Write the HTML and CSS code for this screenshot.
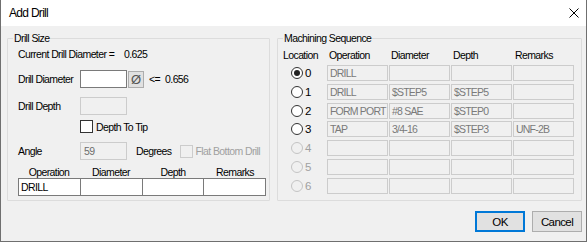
FILE: index.html
```html
<!DOCTYPE html>
<html lang="en">
<head>
  <meta charset="UTF-8" />
  <title>Add Drill</title>
  <link rel="stylesheet" href="styles.css">
</head>
<body>
  <div class="window">
    <div class="titlebar">
      <span class="title">Add Drill</span>
      <svg class="close" width="10" height="10" viewBox="0 0 10 10">
        <path d="M0.5 0.5 L9.5 9.5 M9.5 0.5 L0.5 9.5" stroke="#000" stroke-width="1" fill="none"/>
      </svg>
    </div>

    <div class="client">
      <div class="groups">
        <div class="group group-size">
          <span class="group-title">Drill Size</span>

          <div class="row row-current">
            <span class="label label-wide">Current Drill Diameter =</span>
            <span class="value">0.625</span>
          </div>

          <div class="row row-field">
            <span class="label">Drill Diameter</span>
            <span class="textbox"></span>
            <span class="dia-btn">Ø</span>
            <span class="limit">&lt;=</span>
            <span class="limit-value">0.656</span>
          </div>

          <div class="row row-field">
            <span class="label">Drill Depth</span>
            <span class="textbox disabled"></span>
          </div>

          <div class="row row-check">
            <span class="checkbox"></span>
            <span class="check-label">Depth To Tip</span>
          </div>

          <div class="row row-field row-angle">
            <span class="label">Angle</span>
            <span class="textbox disabled">59</span>
            <span class="degrees">Degrees</span>
            <span class="checkbox disabled"></span>
            <span class="check-label muted">Flat Bottom Drill</span>
          </div>

          <div class="op-head">
            <span>Operation</span>
            <span>Diameter</span>
            <span>Depth</span>
            <span>Remarks</span>
          </div>
          <div class="op-row">
            <span>DRILL</span>
            <span></span>
            <span></span>
            <span></span>
          </div>
        </div>

        <div class="group group-seq">
          <span class="group-title">Machining Sequence</span>

          <div class="seq-head">
            <span class="loc">Location</span>
            <span>Operation</span>
            <span>Diameter</span>
            <span>Depth</span>
            <span>Remarks</span>
          </div>

          <div class="seq-rows">
            <div class="seq-row">
              <span class="loc"><span class="radio checked"></span>0</span>
              <span class="cell">DRILL</span>
              <span class="cell"></span>
              <span class="cell"></span>
              <span class="cell"></span>
            </div>
            <div class="seq-row">
              <span class="loc"><span class="radio"></span>1</span>
              <span class="cell">DRILL</span>
              <span class="cell">$STEP5</span>
              <span class="cell">$STEP5</span>
              <span class="cell"></span>
            </div>
            <div class="seq-row">
              <span class="loc"><span class="radio"></span>2</span>
              <span class="cell">FORM PORT</span>
              <span class="cell">#8 SAE</span>
              <span class="cell">$STEP0</span>
              <span class="cell"></span>
            </div>
            <div class="seq-row">
              <span class="loc"><span class="radio"></span>3</span>
              <span class="cell">TAP</span>
              <span class="cell">3/4-16</span>
              <span class="cell">$STEP3</span>
              <span class="cell">UNF-2B</span>
            </div>
            <div class="seq-row off">
              <span class="loc"><span class="radio"></span>4</span>
              <span class="cell"></span>
              <span class="cell"></span>
              <span class="cell"></span>
              <span class="cell"></span>
            </div>
            <div class="seq-row off">
              <span class="loc"><span class="radio"></span>5</span>
              <span class="cell"></span>
              <span class="cell"></span>
              <span class="cell"></span>
              <span class="cell"></span>
            </div>
            <div class="seq-row off">
              <span class="loc"><span class="radio"></span>6</span>
              <span class="cell"></span>
              <span class="cell"></span>
              <span class="cell"></span>
              <span class="cell"></span>
            </div>
          </div>
        </div>
      </div>

      <div class="buttons">
        <button class="btn btn-default">OK</button>
        <button class="btn">Cancel</button>
      </div>
    </div>
  </div>
</body>
</html>
```

FILE: styles.css
```css
* {
  box-sizing: border-box;
}

body {
  margin: 0;
  background: #fff;
  font-family: "Liberation Sans", Arial, sans-serif;
  font-size: 10.5px;
  letter-spacing: -0.6px;
  white-space: nowrap;
  color: #000;
}

.window {
  width: 587px;
  height: 242px;
  border: 1px solid #6f6f6f;
  border-top: none;
  display: flex;
  flex-direction: column;
}

.titlebar {
  height: 26px;
  background: #fff;
  display: flex;
  align-items: center;
  justify-content: space-between;
  padding: 0 7px 0 8px;
}

.title {
  font-size: 12px;
  letter-spacing: -0.7px;
}

.close {
  display: block;
}

.client {
  flex: 1;
  background: #f0f0f0;
  padding: 12px 4px 0 6px;
}

.groups {
  display: flex;
  gap: 7px;
  height: 163px;
}

.group {
  position: relative;
  border: 1px solid #dcdcdc;
  border-radius: 1px;
}

.group-title {
  position: absolute;
  top: -8px;
  left: 5px;
  padding: 0 1px;
  background: #f0f0f0;
  line-height: 14px;
}

/* left group */

.group-size {
  width: 263px;
  padding: 8px 0 0 10px;
}

.row {
  display: flex;
  align-items: center;
}

.row-current {
  height: 14px;
}

.row-field {
  height: 18px;
  margin-top: 9px;
}

.label {
  width: 62px;
  flex: none;
}

.label-wide {
  width: 106px;
}

.textbox {
  width: 47px;
  height: 18px;
  border: 1px solid #7a7a7a;
  background: #fff;
  padding: 0 3px;
  line-height: 16px;
}

.textbox.disabled {
  border-color: #cccccc;
  background: #f0f0f0;
  color: #6d6d6d;
}

.dia-btn {
  width: 16px;
  height: 17px;
  margin-left: 1px;
  border: 1px solid #adadad;
  background: #e1e1e1;
  color: #555;
  font-size: 13px;
  letter-spacing: 0;
  display: flex;
  align-items: center;
  justify-content: center;
}

.limit {
  margin-left: 5px;
}

.limit-value {
  margin-left: 5px;
}

.row-check {
  height: 13px;
  margin-top: 5px;
  padding-left: 62px;
}

.checkbox {
  width: 13px;
  height: 13px;
  border: 1px solid #333;
  background: #fff;
  flex: none;
}

.checkbox.disabled {
  border-color: #cccccc;
  background: #f0f0f0;
}

.check-label {
  margin-left: 3px;
}

.muted {
  color: #a0a0a0;
}

.degrees {
  margin-left: 9px;
  margin-right: 8px;
}

.op-head {
  display: flex;
  width: 248px;
  height: 11px;
  margin-top: 7px;
  line-height: 11px;
}

.op-head span {
  flex: 1;
  text-align: center;
}

.op-row {
  display: flex;
  width: 248px;
  height: 18px;
  border: 1px solid #7a7a7a;
  background: #fff;
}

.op-row span {
  flex: 1;
  padding: 0 2px;
  line-height: 16px;
  border-left: 1px solid #7a7a7a;
}

.op-row span:first-child {
  border-left: none;
}

/* right group */

.group-seq {
  width: 305px;
  padding: 9px 0 0 5px;
}

.seq-head {
  display: flex;
  height: 14px;
  line-height: 14px;
}

.seq-head span {
  width: 62px;
  padding-left: 2px;
}

.seq-head .loc {
  width: 44px;
  padding-left: 0;
}

.seq-rows {
  display: flex;
  flex-direction: column;
  gap: 2.8px;
  margin-top: 3px;
}

.seq-row {
  display: flex;
  gap: 1px;
  height: 16px;
}

.seq-row .loc {
  width: 43px;
  display: flex;
  align-items: center;
  padding-left: 8px;
  gap: 2px;
  font-size: 11.5px;
}

.radio {
  width: 12px;
  height: 12px;
  border: 1px solid #333;
  border-radius: 50%;
  background: #fff;
  display: flex;
  align-items: center;
  justify-content: center;
}

.radio.checked::after {
  content: "";
  width: 6px;
  height: 6px;
  border-radius: 50%;
  background: #222;
}

.seq-row.off .loc {
  color: #a0a0a0;
}

.seq-row.off .radio {
  border-color: #c4c4c4;
  background: #f0f0f0;
}

.cell {
  width: 61px;
  height: 16px;
  border: 1px solid #cccccc;
  background: #f0f0f0;
  color: #7a7a7a;
  padding: 0 2px;
  line-height: 14px;
  letter-spacing: -0.8px;
  overflow: hidden;
}

/* buttons */

.buttons {
  display: flex;
  justify-content: flex-end;
  gap: 7px;
  margin-top: 10px;
}

.btn {
  width: 50px;
  height: 21px;
  border: 1px solid #adadad;
  background: #e1e1e1;
  font-family: inherit;
  font-size: 11.5px;
  letter-spacing: -0.6px;
  color: #000;
  padding: 0;
}

.btn-default {
  border: 2px solid #0078d7;
}
```
